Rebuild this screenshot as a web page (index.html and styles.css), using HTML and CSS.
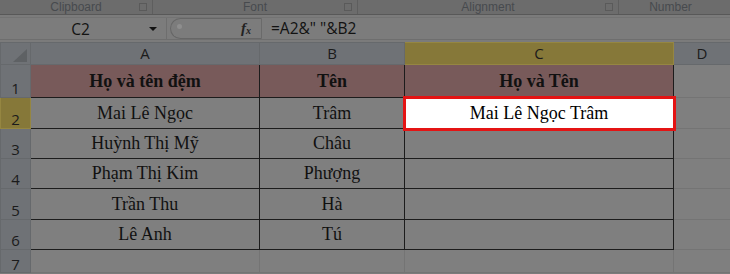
FILE: index.html
```html
<!DOCTYPE html>
<html lang="vi">
<head>
  <meta charset="UTF-8">
  <title>Excel - nối họ và tên</title>
  <link rel="stylesheet" href="styles.css">
</head>
<body>
  <div class="ribbon">
    <div class="group group-clipboard">Clipboard<span class="launcher"></span></div>
    <div class="group group-font">Font<span class="launcher"></span></div>
    <div class="group group-align">Alignment<span class="launcher"></span></div>
    <div class="group group-number">Number</div>
  </div>

  <div class="formula-bar">
    <div class="name-box">
      <span class="name">C2</span>
      <span class="arrow"></span>
    </div>
    <div class="fx-box">
      <span class="grip"></span>
      <span class="fx">f<sub>x</sub></span>
    </div>
    <div class="formula">=A2&amp;" "&amp;B2</div>
  </div>

  <table class="sheet">
    <colgroup>
      <col class="c-row">
      <col class="c-a">
      <col class="c-b">
      <col class="c-c">
      <col class="c-d">
    </colgroup>
    <thead>
      <tr>
        <th class="corner"><span class="tri"></span></th>
        <th>A</th>
        <th>B</th>
        <th class="sel">C</th>
        <th>D</th>
      </tr>
    </thead>
    <tbody>
      <tr class="r1">
        <th>1</th>
        <td class="title">Họ và tên đệm</td>
        <td class="title">Tên</td>
        <td class="title">Họ và Tên</td>
        <td class="empty"></td>
      </tr>
      <tr class="r2">
        <th class="sel">2</th>
        <td>Mai Lê Ngọc</td>
        <td>Trâm</td>
        <td class="active">Mai Lê Ngọc Trâm</td>
        <td class="empty"></td>
      </tr>
      <tr class="r3">
        <th>3</th>
        <td>Huỳnh Thị Mỹ</td>
        <td>Châu</td>
        <td></td>
        <td class="empty"></td>
      </tr>
      <tr class="r4">
        <th>4</th>
        <td>Phạm Thị Kim</td>
        <td>Phượng</td>
        <td></td>
        <td class="empty"></td>
      </tr>
      <tr class="r5">
        <th>5</th>
        <td>Trần Thu</td>
        <td>Hà</td>
        <td></td>
        <td class="empty"></td>
      </tr>
      <tr class="r6">
        <th>6</th>
        <td>Lê Anh</td>
        <td>Tú</td>
        <td></td>
        <td class="empty"></td>
      </tr>
      <tr class="r7">
        <th>7</th>
        <td class="empty"></td>
        <td class="empty"></td>
        <td class="empty"></td>
        <td class="empty"></td>
      </tr>
    </tbody>
  </table>
</body>
</html>
```

FILE: styles.css
```css
body {
  margin: 0;
  width: 730px;
  height: 274px;
  overflow: hidden;
  background-color: #7b7b7b;
  font-family: "Liberation Sans", Arial, sans-serif;
}

/* ribbon group captions */
.ribbon {
  display: flex;
  height: 14px;
  background-color: #6c6c6c;
  border-bottom: 1px solid #585858;
}

.group {
  position: relative;
  height: 14px;
  text-align: center;
  font-family: "Liberation Sans", Arial, sans-serif;
  font-size: 12px;
  line-height: 14px;
  color: #474a4e;
  border-right: 1px solid #5e5e5e;
}

.group-clipboard {
  width: 152px;
}

.group-font {
  width: 204px;
}

.group-align {
  width: 260px;
}

.group-number {
  flex: 1;
  border-right: none;
  padding-right: 8px;
}

.launcher {
  position: absolute;
  right: 5px;
  top: 3px;
  width: 6px;
  height: 6px;
  border: 1px solid #5a5a5a;
}

/* formula bar */
.formula-bar {
  display: flex;
  height: 21px;
  margin-top: 2px;
  border-top: 1px solid #737373;
  border-bottom: 1px solid #6e6e6e;
  background-color: #7c7c7c;
}

.name-box {
  display: flex;
  align-items: center;
  width: 166px;
  border-right: 1px solid #6e6e6e;
}

.name {
  flex: 1;
  text-align: center;
  font-family: "Open Sans", sans-serif;
  font-size: 15.5px;
  color: #121212;
  padding-left: 12px;
}

.arrow {
  width: 0;
  height: 0;
  margin-right: 9px;
  border-left: 4px solid transparent;
  border-right: 4px solid transparent;
  border-top: 4px solid #111;
}

.fx-box {
  display: flex;
  align-items: center;
  justify-content: space-between;
  width: 92px;
  margin-left: 3px;
  border: 1px solid #666;
  border-right: 1px solid #6a6a6a;
  border-radius: 12px 0 0 12px;
  padding: 0 10px 0 6px;
  box-sizing: border-box;
}

.grip {
  width: 5px;
  height: 5px;
  border-radius: 50%;
  background-color: #8e8e8e;
  margin-bottom: 4px;
}

.fx {
  font-family: "Liberation Serif", serif;
  font-style: italic;
  font-weight: bold;
  font-size: 15px;
  color: #222;
}

.fx sub {
  font-size: 10px;
  vertical-align: -1px;
}

.formula {
  flex: 1;
  padding-left: 9px;
  font-family: "Open Sans", sans-serif;
  font-size: 15.5px;
  line-height: 21px;
  color: #121212;
}

/* worksheet grid */
.sheet {
  margin-top: 2px;
  border-collapse: collapse;
  table-layout: fixed;
  width: 730px;
  border-top: 1px solid #6a6a6a;
}

.c-row {
  width: 30px;
}

.c-a {
  width: 229px;
}

.c-b {
  width: 145px;
}

.c-c {
  width: 269px;
}

.c-d {
  width: 57px;
}

th {
  background-color: #6f7276;
  border: 1px solid #66696c;
  font-family: "Open Sans", sans-serif;
  font-weight: normal;
  font-size: 15px;
  color: #1b1b1b;
  padding: 0;
}

thead th {
  height: 21px;
  line-height: 21px;
}

tbody th {
  vertical-align: bottom;
  line-height: 18px;
}

th.sel {
  background-color: #867839;
  border-color: #958641;
}

.corner {
  position: relative;
}

.tri {
  position: absolute;
  right: 3px;
  bottom: 2px;
  width: 0;
  height: 0;
  border-left: 14px solid transparent;
  border-bottom: 13px solid #5e6164;
}

td {
  background-color: #7f7f7f;
  border: 1px solid #1c1c1c;
  padding: 0;
  text-align: center;
  font-family: "Liberation Serif", "Times New Roman", serif;
  font-size: 18px;
  color: #111;
}

td.empty {
  border-color: #747474;
}

td.title {
  background-color: #785a5a;
  font-weight: bold;
}

td.active {
  background-color: #fff;
  outline: 3px solid #e41414;
  outline-offset: -1px;
  color: #000;
}

.r1 th,
.r1 td {
  height: 32px;
}

.r2 th,
.r2 td {
  height: 30px;
}

.r3 th,
.r3 td,
.r4 th,
.r4 td,
.r6 th,
.r6 td {
  height: 29px;
}

.r5 th,
.r5 td {
  height: 30px;
}

.r7 th,
.r7 td {
  height: 22px;
}

.r7 th {
  line-height: 16px;
}
```
